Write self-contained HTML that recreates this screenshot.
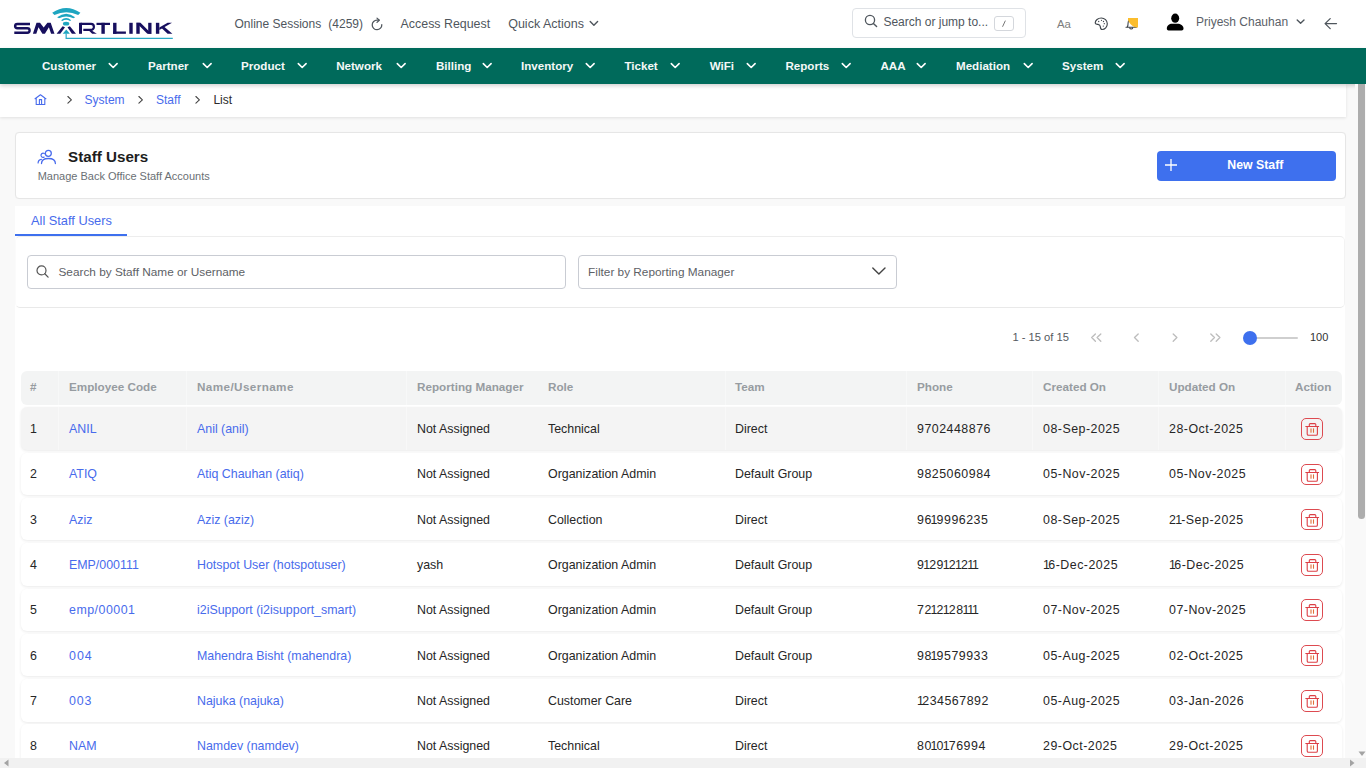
<!DOCTYPE html>
<html><head><meta charset="utf-8"><title>Staff Users</title>
<style>
html,body{margin:0;padding:0;width:1366px;height:768px;overflow:hidden;background:#f9f9f9;font-family:"Liberation Sans", sans-serif;}
.t{position:absolute;white-space:nowrap;}
svg{overflow:visible}
</style></head><body>
<div style="position:absolute;left:0px;top:0px;width:1366px;height:48px;background:#fff"></div>
<svg style="position:absolute;left:0px;top:0px" width="180" height="44" viewBox="0 0 180 44">
<g fill="#1ea5c0">
<path d="M52.2 12.8 Q66.3 3.2 80.4 12.8 L78.2 15 Q66.3 9.4 54.4 15 Z"/>
<path d="M57.1 17.2 Q66.2 10.1 75.2 17.2 L73.4 18.2 Q66.2 14.6 59 18.2 Z"/>
<path d="M61.1 20.3 Q66.2 15.5 71.2 20.3 L70 20.9 Q66.2 18.7 62.3 20.9 Z"/>
<ellipse cx="66.1" cy="23.65" rx="3.2" ry="1.95"/>
<path d="M62.7 33.7 L66.3 29.4 L69.9 33.7 Z"/>
</g>
<path d="M66.15 33.5 V38.3 H172.8" stroke="#2aa9c6" stroke-width="1.2" fill="none"/>
<g fill="#170f5e">
<path d="M32.9 33.8 L36.5 22.8 L40 22.8 L43.7 27.6 L47.4 22.8 L50.7 22.8 L54.5 33.8 L51.1 33.8 L48.9 27.2 L44.9 33.8 L42.4 33.8 L38.5 27.2 L36.3 33.8 Z"/>
<path d="M56.6 33.7 L62.6 26.2 L65 27.3 L60.3 33.7 Z"/>
<path d="M67.5 27.3 L69.9 26.2 L76 33.7 L71.9 33.7 Z"/>
<rect x="79" y="22.8" width="3" height="11"/>
<path d="M88.8 30.5 L91.6 30.5 L96.8 33.8 L92.2 33.8 Z"/>
<rect x="96.5" y="22.8" width="13.5" height="2.2"/>
<rect x="101.4" y="22.8" width="3.4" height="11"/>
<rect x="113.1" y="22.8" width="3.4" height="11"/>
<rect x="113.1" y="31.5" width="12.8" height="2.3"/>
<rect x="129.3" y="22.8" width="3.4" height="11"/>
<rect x="136.3" y="22.8" width="3.4" height="11"/>
<rect x="148.2" y="22.8" width="3.3" height="11"/>
<path d="M136.3 22.8 L140.5 22.8 L151.5 33.8 L147.3 33.8 Z"/>
<rect x="155.9" y="22.8" width="3.4" height="11"/>
<path d="M159.3 27.6 L167.6 22.8 L172 22.8 L159.3 30 Z"/>
<path d="M161 27.4 L163.6 26.3 L172.4 33.8 L167.6 33.8 Z"/>
</g>
<g stroke="#170f5e" fill="none">
<path d="M30 23.95 H17.4 A2.3 2.15 0 0 0 17.4 28.25 H27.3 A2.3 2.25 0 0 1 27.3 32.75 H14.3" stroke-width="2.4"/>
<path d="M80.4 23.95 H91 A2.9 2.95 0 0 1 91 29.85 H83.3" stroke-width="2.2"/>
</g>
</svg>
<div class="t" style="left:234.5px;top:17.74px;font-size:12px;line-height:12px;font-weight:400;color:#4f565d;">Online Sessions</div>
<div class="t" style="left:328.3px;top:17.74px;font-size:12px;line-height:12px;font-weight:400;color:#4f565d;">(4259)</div>
<svg style="position:absolute;left:369.5px;top:17px" width="14" height="14" viewBox="0 0 14 14"><path d="M11.8 7.7 A4.8 4.8 0 1 1 7.1 3.1 H9" stroke="#4f565d" stroke-width="1.25" fill="none" stroke-linecap="round"/><path d="M7 1.1 L9.3 3.2 L7 5.4" stroke="#4f565d" stroke-width="1.25" fill="none" stroke-linecap="round" stroke-linejoin="round"/></svg>
<div class="t" style="left:400.6px;top:18.00px;font-size:12.4px;line-height:12.4px;font-weight:400;color:#4f565d;">Access Request</div>
<div class="t" style="left:508.2px;top:17.92px;font-size:12.5px;line-height:12.5px;font-weight:400;color:#4f565d;">Quick Actions</div>
<svg style="position:absolute;left:589px;top:20px" width="10" height="7" viewBox="0 0 10 7"><path d="M1.2 1.5 L4.9 5.2 L8.6 1.5" stroke="#4f565d" stroke-width="1.4" fill="none" stroke-linecap="round" stroke-linejoin="round"/></svg>
<div style="position:absolute;left:852px;top:8px;width:174px;height:30px;background:#fff;border:1px solid #dfe2e6;border-radius:4px;box-sizing:border-box"></div>
<svg style="position:absolute;left:864px;top:14px" width="14" height="14" viewBox="0 0 14 14"><circle cx="6" cy="6" r="4.6" stroke="#4f565d" stroke-width="1.3" fill="none"/><path d="M9.4 9.4 L12.6 12.6" stroke="#4f565d" stroke-width="1.4" stroke-linecap="round"/></svg>
<div class="t" style="left:883.4px;top:15.84px;font-size:12px;line-height:12px;font-weight:400;color:#4f565d;">Search or jump to...</div>
<div style="position:absolute;left:994px;top:15.5px;width:19.5px;height:15px;border:1px solid #d4d7dc;border-radius:3px;box-sizing:border-box"></div>
<svg style="position:absolute;left:994px;top:15.5px" width="20" height="15" viewBox="0 0 20 15"><path d="M11.2 5 L8.7 10.4" stroke="#666" stroke-width="0.9" stroke-linecap="round"/></svg>
<div class="t" style="left:1057px;top:18.75px;font-size:11.4px;line-height:11.4px;font-weight:400;color:#7d7d7d;">Aa</div>
<svg style="position:absolute;left:1094px;top:17px" width="15" height="14" viewBox="0 0 15 14"><path d="M1.2 6.1 C1.2 3.2 4 1 7.3 1 C10.6 1 13.3 3.6 13.3 6.8 C13.3 10 10.9 12.5 8.1 12.5 C6.6 12.5 6.4 11 6.3 9.6 C6.2 8.4 5.2 7.6 4 7.4 C2.6 7.2 1.2 7.2 1.2 6.1 Z" stroke="#3f454b" stroke-width="1.15" fill="none" stroke-linejoin="round"/><g fill="#3f454b"><circle cx="4.7" cy="4.5" r=".65"/><circle cx="7.5" cy="3.3" r=".65"/><circle cx="9.5" cy="4.5" r=".65"/><circle cx="10.3" cy="6.7" r=".65"/><circle cx="9.3" cy="9.1" r=".65"/></g></svg>
<svg style="position:absolute;left:1124px;top:17px" width="16" height="14" viewBox="0 0 16 14"><path d="M2 10.3 H12.4 M3.2 10.3 C4 9 4.1 7.5 4.1 6 C4.1 3.8 5.4 2.2 7.2 2.2 C9 2.2 10.3 3.8 10.3 6 C10.3 7.5 10.4 9 11.2 10.3 M5.8 11.2 C6.2 12.2 8.2 12.2 8.6 11.2" stroke="#3f454b" stroke-width="1.1" fill="none" stroke-linecap="round"/><path d="M4 1 H14 V10.5 H12.5 C9 10.5 5.5 6.5 4 3 Z" fill="#fbbd2d"/></svg>
<svg style="position:absolute;left:1166px;top:13px" width="18" height="18" viewBox="0 0 18 18"><ellipse cx="9.2" cy="5.2" rx="4" ry="4.6" fill="#000"/><path d="M0.8 15.4 C0.8 12.5 3.4 10.7 6 10.7 H11.6 C14.4 10.7 17.5 12.5 17.5 15.4 C17.5 16.7 16.8 17.4 15.6 17.4 H2.6 C1.5 17.4 0.8 16.7 0.8 15.4 Z" fill="#000"/></svg>
<div class="t" style="left:1196px;top:15.84px;font-size:12px;line-height:12px;font-weight:400;color:#5b6168;">Priyesh Chauhan</div>
<svg style="position:absolute;left:1295px;top:18px" width="11" height="8" viewBox="0 0 11 8"><path d="M2.2 2 L5.6 5.3 L9 2" stroke="#4f565d" stroke-width="1.4" fill="none" stroke-linecap="round" stroke-linejoin="round"/></svg>
<svg style="position:absolute;left:1323px;top:17px" width="15" height="13" viewBox="0 0 15 13"><path d="M13.5 6.6 H2.3 M7.2 1.6 L2.1 6.6 L7.2 11.6" stroke="#4f565d" stroke-width="1.3" fill="none" stroke-linecap="round" stroke-linejoin="round"/></svg>
<div style="position:absolute;left:0px;top:48px;width:1366px;height:36px;background:#006a5b;box-shadow:0 2px 4px rgba(0,0,0,.18);z-index:3"></div>
<div class="t" style="left:42px;top:60.38px;font-size:11.6px;line-height:11.6px;font-weight:700;color:#f4f8f7;z-index:4;width:58px">Customer</div>
<svg style="position:absolute;z-index:4;left:107.9px;top:62px" width="11" height="8" viewBox="0 0 11 8"><path d="M1.3 1.6 L5.2 5.5 L9.1 1.6" stroke="#fff" stroke-width="1.6" fill="none" stroke-linecap="round" stroke-linejoin="round"/></svg>
<div class="t" style="left:148px;top:60.38px;font-size:11.6px;line-height:11.6px;font-weight:700;color:#f4f8f7;z-index:4;width:45px">Partner</div>
<svg style="position:absolute;z-index:4;left:202.0px;top:62px" width="11" height="8" viewBox="0 0 11 8"><path d="M1.3 1.6 L5.2 5.5 L9.1 1.6" stroke="#fff" stroke-width="1.6" fill="none" stroke-linecap="round" stroke-linejoin="round"/></svg>
<div class="t" style="left:241px;top:60.38px;font-size:11.6px;line-height:11.6px;font-weight:700;color:#f4f8f7;z-index:4;width:47px">Product</div>
<svg style="position:absolute;z-index:4;left:296.5px;top:62px" width="11" height="8" viewBox="0 0 11 8"><path d="M1.3 1.6 L5.2 5.5 L9.1 1.6" stroke="#fff" stroke-width="1.6" fill="none" stroke-linecap="round" stroke-linejoin="round"/></svg>
<div class="t" style="left:336.2px;top:60.38px;font-size:11.6px;line-height:11.6px;font-weight:700;color:#f4f8f7;z-index:4;width:51px">Network</div>
<svg style="position:absolute;z-index:4;left:395.5px;top:62px" width="11" height="8" viewBox="0 0 11 8"><path d="M1.3 1.6 L5.2 5.5 L9.1 1.6" stroke="#fff" stroke-width="1.6" fill="none" stroke-linecap="round" stroke-linejoin="round"/></svg>
<div class="t" style="left:436px;top:60.38px;font-size:11.6px;line-height:11.6px;font-weight:700;color:#f4f8f7;z-index:4;width:37px">Billing</div>
<svg style="position:absolute;z-index:4;left:481.5px;top:62px" width="11" height="8" viewBox="0 0 11 8"><path d="M1.3 1.6 L5.2 5.5 L9.1 1.6" stroke="#fff" stroke-width="1.6" fill="none" stroke-linecap="round" stroke-linejoin="round"/></svg>
<div class="t" style="left:521px;top:60.38px;font-size:11.6px;line-height:11.6px;font-weight:700;color:#f4f8f7;z-index:4;width:55.7px">Inventory</div>
<svg style="position:absolute;z-index:4;left:584.5px;top:62px" width="11" height="8" viewBox="0 0 11 8"><path d="M1.3 1.6 L5.2 5.5 L9.1 1.6" stroke="#fff" stroke-width="1.6" fill="none" stroke-linecap="round" stroke-linejoin="round"/></svg>
<div class="t" style="left:624.4px;top:60.38px;font-size:11.6px;line-height:11.6px;font-weight:700;color:#f4f8f7;z-index:4;width:37.2px">Ticket</div>
<svg style="position:absolute;z-index:4;left:670.0px;top:62px" width="11" height="8" viewBox="0 0 11 8"><path d="M1.3 1.6 L5.2 5.5 L9.1 1.6" stroke="#fff" stroke-width="1.6" fill="none" stroke-linecap="round" stroke-linejoin="round"/></svg>
<div class="t" style="left:709.7px;top:60.38px;font-size:11.6px;line-height:11.6px;font-weight:700;color:#f4f8f7;z-index:4;width:27.5px">WiFi</div>
<svg style="position:absolute;z-index:4;left:745.5px;top:62px" width="11" height="8" viewBox="0 0 11 8"><path d="M1.3 1.6 L5.2 5.5 L9.1 1.6" stroke="#fff" stroke-width="1.6" fill="none" stroke-linecap="round" stroke-linejoin="round"/></svg>
<div class="t" style="left:785.4px;top:60.38px;font-size:11.6px;line-height:11.6px;font-weight:700;color:#f4f8f7;z-index:4;width:47px">Reports</div>
<svg style="position:absolute;z-index:4;left:840.5px;top:62px" width="11" height="8" viewBox="0 0 11 8"><path d="M1.3 1.6 L5.2 5.5 L9.1 1.6" stroke="#fff" stroke-width="1.6" fill="none" stroke-linecap="round" stroke-linejoin="round"/></svg>
<div class="t" style="left:880.4px;top:60.38px;font-size:11.6px;line-height:11.6px;font-weight:700;color:#f4f8f7;z-index:4;width:28px">AAA</div>
<svg style="position:absolute;z-index:4;left:916.3px;top:62px" width="11" height="8" viewBox="0 0 11 8"><path d="M1.3 1.6 L5.2 5.5 L9.1 1.6" stroke="#fff" stroke-width="1.6" fill="none" stroke-linecap="round" stroke-linejoin="round"/></svg>
<div class="t" style="left:956px;top:60.38px;font-size:11.6px;line-height:11.6px;font-weight:700;color:#f4f8f7;z-index:4;width:58.5px">Mediation</div>
<svg style="position:absolute;z-index:4;left:1022.9px;top:62px" width="11" height="8" viewBox="0 0 11 8"><path d="M1.3 1.6 L5.2 5.5 L9.1 1.6" stroke="#fff" stroke-width="1.6" fill="none" stroke-linecap="round" stroke-linejoin="round"/></svg>
<div class="t" style="left:1062px;top:60.38px;font-size:11.6px;line-height:11.6px;font-weight:700;color:#f4f8f7;z-index:4;width:45.2px">System</div>
<svg style="position:absolute;z-index:4;left:1115.1px;top:62px" width="11" height="8" viewBox="0 0 11 8"><path d="M1.3 1.6 L5.2 5.5 L9.1 1.6" stroke="#fff" stroke-width="1.6" fill="none" stroke-linecap="round" stroke-linejoin="round"/></svg>
<div style="position:absolute;left:0px;top:84px;width:1346px;height:33px;background:#fff;box-shadow:0 1px 3px rgba(0,0,0,.10);z-index:2"></div>
<svg style="position:absolute;z-index:3;left:34px;top:93px" width="13" height="13" viewBox="0 0 13 13"><path d="M1.05 5.75 L6.44 1.7 L11.9 5.75 M2.2 4.9 V11.5 H10.8 V4.9 M5.4 11.5 V6.6 H7.6 V11.5" stroke="#486bec" stroke-width="1.1" fill="none" stroke-linejoin="round" stroke-linecap="round"/></svg>
<svg style="position:absolute;z-index:3;left:66.5px;top:95px" width="7" height="10" viewBox="0 0 7 10"><path d="M0.9 1.5 L4.4 4.8 L0.9 8.1" stroke="#444" stroke-width="1.1" fill="none" stroke-linecap="round" stroke-linejoin="round"/></svg>
<svg style="position:absolute;z-index:3;left:137.7px;top:95px" width="7" height="10" viewBox="0 0 7 10"><path d="M0.9 1.5 L4.4 4.8 L0.9 8.1" stroke="#444" stroke-width="1.1" fill="none" stroke-linecap="round" stroke-linejoin="round"/></svg>
<svg style="position:absolute;z-index:3;left:195.2px;top:95px" width="7" height="10" viewBox="0 0 7 10"><path d="M0.9 1.5 L4.4 4.8 L0.9 8.1" stroke="#444" stroke-width="1.1" fill="none" stroke-linecap="round" stroke-linejoin="round"/></svg>
<div class="t" style="left:84.6px;top:93.54px;font-size:12px;line-height:12px;font-weight:400;color:#486bec;z-index:3">System</div>
<div class="t" style="left:156px;top:93.54px;font-size:12px;line-height:12px;font-weight:400;color:#486bec;z-index:3">Staff</div>
<div class="t" style="left:213.4px;top:93.54px;font-size:12px;line-height:12px;font-weight:400;color:#2b2b2b;z-index:3">List</div>
<div style="position:absolute;left:15px;top:132px;width:1331px;height:67px;background:#fff;border:1px solid #e6e6e6;border-radius:4px;box-sizing:border-box;box-shadow:0 0 1px rgba(0,0,0,.04)"></div>
<svg style="position:absolute;left:37px;top:149px" width="20" height="16" viewBox="0 0 20 16"><circle cx="11.3" cy="4.3" r="3" stroke="#486bec" stroke-width="1.3" fill="none"/><path d="M4.5 14.6 C4.5 11.3 7.3 9.5 11.4 9.5 C15.5 9.5 18.4 11.3 18.4 14.6" stroke="#486bec" stroke-width="1.3" fill="none" stroke-linecap="round"/><path d="M7.4 4.6 A2.1 2.1 0 1 0 7.1 8.1 M1.1 14 C1.1 11.9 2.4 10.6 4.4 10.3" stroke="#486bec" stroke-width="1.2" fill="none" stroke-linecap="round"/></svg>
<div class="t" style="left:68px;top:149.13px;font-size:15.2px;line-height:15.2px;font-weight:700;color:#1d1d1d;">Staff Users</div>
<div class="t" style="left:37.7px;top:170.69px;font-size:11px;line-height:11px;font-weight:400;color:#6a6f74;">Manage Back Office Staff Accounts</div>
<div style="position:absolute;left:1157px;top:151px;width:179px;height:30px;background:#3e70ee;border-radius:4px"></div>
<svg style="position:absolute;left:1164px;top:158px" width="14" height="14" viewBox="0 0 14 14"><path d="M7 1 V13 M1 7 H13" stroke="#fff" stroke-width="1.3"/></svg>
<div class="t" style="left:1227.3px;top:158.89px;font-size:12.3px;line-height:12.3px;font-weight:700;color:#fff;">New Staff</div>
<div style="position:absolute;left:15px;top:206px;width:1330px;height:552px;background:#fff"></div>
<div class="t" style="left:31px;top:215.06px;font-size:12.8px;line-height:12.8px;font-weight:400;color:#486bec;">All Staff Users</div>
<div style="position:absolute;left:15px;top:234px;width:112.4px;height:2.2px;background:#3e70ee"></div>
<div style="position:absolute;left:27px;top:254.5px;width:539px;height:34px;border:1px solid #c9ccd3;border-radius:4px;box-sizing:border-box;background:#fff"></div>
<svg style="position:absolute;left:36px;top:265px" width="14" height="14" viewBox="0 0 14 14"><circle cx="5.5" cy="5.4" r="4.5" stroke="#555" stroke-width="1.2" fill="none"/><path d="M8.8 8.8 L12.1 12.1" stroke="#555" stroke-width="1.3" stroke-linecap="round"/></svg>
<div class="t" style="left:58.5px;top:266.91px;font-size:11.8px;line-height:11.8px;font-weight:400;color:#5d6166;">Search by Staff Name or Username</div>
<div style="position:absolute;left:578px;top:254.5px;width:319px;height:34px;border:1px solid #c9ccd3;border-radius:4px;box-sizing:border-box;background:#fff"></div>
<div class="t" style="left:588.1px;top:266.91px;font-size:11.8px;line-height:11.8px;font-weight:400;color:#5d6166;">Filter by Reporting Manager</div>
<svg style="position:absolute;left:871px;top:266px" width="16" height="11" viewBox="0 0 16 11"><path d="M1.8 2 L7.9 8.1 L14 2" stroke="#444" stroke-width="1.4" fill="none" stroke-linecap="round" stroke-linejoin="round"/></svg>
<div style="position:absolute;left:15px;top:236px;width:1330px;height:72px;border:1px solid #f3f3f3;border-left-color:#fbfbfb;border-bottom-color:#e9e9e9;border-top-color:#ededed;border-radius:5px;box-sizing:border-box"></div>
<div class="t" style="left:1012.4px;top:331.72px;font-size:11.2px;line-height:11.2px;font-weight:400;color:#555a60;">1 - 15 of 15</div>
<svg style="position:absolute;left:1089px;top:331px" width="15" height="13" viewBox="0 0 15 13"><path d="M6.4 3 L2.7 6.6 L6.4 10.2 M11.8 3 L8.1 6.6 L11.8 10.2" stroke="#bdbdbd" stroke-width="1.35" fill="none" stroke-linecap="round" stroke-linejoin="round"/></svg>
<svg style="position:absolute;left:1132px;top:331px" width="9" height="13" viewBox="0 0 9 13"><path d="M6.2 3 L2.5 6.6 L6.2 10.2" stroke="#bdbdbd" stroke-width="1.35" fill="none" stroke-linecap="round" stroke-linejoin="round"/></svg>
<svg style="position:absolute;left:1170px;top:331px" width="9" height="13" viewBox="0 0 9 13"><path d="M3.2 3 L6.9 6.6 L3.2 10.2" stroke="#bdbdbd" stroke-width="1.35" fill="none" stroke-linecap="round" stroke-linejoin="round"/></svg>
<svg style="position:absolute;left:1208px;top:331px" width="15" height="13" viewBox="0 0 15 13"><path d="M2.8 3 L6.5 6.6 L2.8 10.2 M8.2 3 L11.9 6.6 L8.2 10.2" stroke="#bdbdbd" stroke-width="1.35" fill="none" stroke-linecap="round" stroke-linejoin="round"/></svg>
<div style="position:absolute;left:1256px;top:336.5px;width:42px;height:2px;background:#cfcfcf;border-radius:1px"></div>
<div style="position:absolute;left:1242.7px;top:330.6px;width:14.2px;height:14.2px;background:#3e70ee;border-radius:50%"></div>
<div class="t" style="left:1309.9px;top:331.89px;font-size:11px;line-height:11px;font-weight:400;color:#333;">100</div>
<div style="position:absolute;left:21px;top:370.5px;width:1320.5px;height:34.3px;background:#f3f4f4;border-radius:6px"></div>
<div style="position:absolute;left:58px;top:370.5px;width:1px;height:34.3px;background:#f7f8f8"></div>
<div style="position:absolute;left:186.3px;top:370.5px;width:1px;height:34.3px;background:#f7f8f8"></div>
<div style="position:absolute;left:406.2px;top:370.5px;width:1px;height:34.3px;background:#f7f8f8"></div>
<div style="position:absolute;left:724.6px;top:370.5px;width:1px;height:34.3px;background:#f7f8f8"></div>
<div style="position:absolute;left:906.2px;top:370.5px;width:1px;height:34.3px;background:#f7f8f8"></div>
<div style="position:absolute;left:1032.4px;top:370.5px;width:1px;height:34.3px;background:#f7f8f8"></div>
<div style="position:absolute;left:1158px;top:370.5px;width:1px;height:34.3px;background:#f7f8f8"></div>
<div style="position:absolute;left:1284.6px;top:370.5px;width:1px;height:34.3px;background:#f7f8f8"></div>
<div class="t" style="left:30px;top:380.50px;font-size:11.7px;line-height:11.7px;font-weight:700;color:#979ca1;">#</div>
<div class="t" style="left:69px;top:380.50px;font-size:11.7px;line-height:11.7px;font-weight:700;color:#979ca1;">Employee Code</div>
<div class="t" style="left:197px;top:380.50px;font-size:11.7px;line-height:11.7px;font-weight:700;color:#979ca1;letter-spacing:0.4px">Name/Username</div>
<div class="t" style="left:417px;top:380.50px;font-size:11.7px;line-height:11.7px;font-weight:700;color:#979ca1;">Reporting Manager</div>
<div class="t" style="left:548px;top:380.50px;font-size:11.7px;line-height:11.7px;font-weight:700;color:#979ca1;">Role</div>
<div class="t" style="left:735px;top:380.50px;font-size:11.7px;line-height:11.7px;font-weight:700;color:#979ca1;">Team</div>
<div class="t" style="left:917px;top:380.50px;font-size:11.7px;line-height:11.7px;font-weight:700;color:#979ca1;">Phone</div>
<div class="t" style="left:1043px;top:380.50px;font-size:11.7px;line-height:11.7px;font-weight:700;color:#979ca1;">Created On</div>
<div class="t" style="left:1169px;top:380.50px;font-size:11.7px;line-height:11.7px;font-weight:700;color:#979ca1;">Updated On</div>
<div class="t" style="left:1295px;top:380.50px;font-size:11.7px;line-height:11.7px;font-weight:700;color:#979ca1;">Action</div>
<div style="position:absolute;left:21px;top:407.3px;width:1320.5px;height:42.6px;background:#f4f4f4;border-radius:6px;box-shadow:0 1px 3px rgba(0,0,0,.085)"></div>
<div style="position:absolute;left:58px;top:407.3px;width:1px;height:42.6px;background:#f8f8f8"></div>
<div style="position:absolute;left:186.3px;top:407.3px;width:1px;height:42.6px;background:#f8f8f8"></div>
<div style="position:absolute;left:406.2px;top:407.3px;width:1px;height:42.6px;background:#f8f8f8"></div>
<div style="position:absolute;left:724.6px;top:407.3px;width:1px;height:42.6px;background:#f8f8f8"></div>
<div style="position:absolute;left:906.2px;top:407.3px;width:1px;height:42.6px;background:#f8f8f8"></div>
<div style="position:absolute;left:1032.4px;top:407.3px;width:1px;height:42.6px;background:#f8f8f8"></div>
<div style="position:absolute;left:1158px;top:407.3px;width:1px;height:42.6px;background:#f8f8f8"></div>
<div style="position:absolute;left:1284.6px;top:407.3px;width:1px;height:42.6px;background:#f8f8f8"></div>
<div class="t" style="left:30px;top:423.10px;font-size:12.4px;line-height:12.4px;font-weight:400;color:#262626;">1</div>
<div class="t" style="left:69px;top:423.10px;font-size:12.4px;line-height:12.4px;font-weight:400;color:#486bec;">ANIL</div>
<div class="t" style="left:197px;top:423.10px;font-size:12.4px;line-height:12.4px;font-weight:400;color:#486bec;">Anil (anil)</div>
<div class="t" style="left:417px;top:423.10px;font-size:12.4px;line-height:12.4px;font-weight:400;color:#262626;">Not Assigned</div>
<div class="t" style="left:548px;top:423.10px;font-size:12.4px;line-height:12.4px;font-weight:400;color:#262626;">Technical</div>
<div class="t" style="left:735px;top:423.10px;font-size:12.4px;line-height:12.4px;font-weight:400;color:#262626;">Direct</div>
<div class="t" style="left:917px;top:423.10px;font-size:12.4px;line-height:12.4px;font-weight:400;color:#262626;letter-spacing:0.5px">9702448876</div>
<div class="t" style="left:1043px;top:423.10px;font-size:12.4px;line-height:12.4px;font-weight:400;color:#262626;letter-spacing:0.5px">08-Sep-2025</div>
<div class="t" style="left:1169px;top:423.10px;font-size:12.4px;line-height:12.4px;font-weight:400;color:#262626;letter-spacing:0.5px">28-Oct-2025</div>
<div style="position:absolute;left:1301.2px;top:418.2px;width:21.8px;height:21.6px;border:1.3px solid #dd4a50;border-radius:5px;box-sizing:border-box"></div>
<svg style="position:absolute;left:1301.2px;top:418.2px" width="22" height="22" viewBox="0 0 22 22"><path d="M8.3 8.4 V6.6 Q8.3 5.6 9.3 5.6 H13.8 Q14.8 5.6 14.8 6.6 V8.4 M4.8 8.5 H17.6 M6.2 8.5 V15.9 Q6.2 17.2 7.5 17.2 H15.1 Q16.4 17.2 16.4 15.9 V8.5" stroke="#dc3f45" stroke-width="1.1" fill="none" stroke-linecap="round" stroke-linejoin="round"/><path d="M10 10.8 V14.3 M12.5 10.8 V14.3" stroke="#e0703a" stroke-width="1.1" stroke-linecap="round"/></svg>
<div style="position:absolute;left:21px;top:452.6px;width:1320.5px;height:42.6px;background:#fff;border-radius:6px;box-shadow:0 1px 3px rgba(0,0,0,.085)"></div>
<div class="t" style="left:30px;top:468.40px;font-size:12.4px;line-height:12.4px;font-weight:400;color:#262626;">2</div>
<div class="t" style="left:69px;top:468.40px;font-size:12.4px;line-height:12.4px;font-weight:400;color:#486bec;">ATIQ</div>
<div class="t" style="left:197px;top:468.40px;font-size:12.4px;line-height:12.4px;font-weight:400;color:#486bec;">Atiq Chauhan (atiq)</div>
<div class="t" style="left:417px;top:468.40px;font-size:12.4px;line-height:12.4px;font-weight:400;color:#262626;">Not Assigned</div>
<div class="t" style="left:548px;top:468.40px;font-size:12.4px;line-height:12.4px;font-weight:400;color:#262626;">Organization Admin</div>
<div class="t" style="left:735px;top:468.40px;font-size:12.4px;line-height:12.4px;font-weight:400;color:#262626;">Default Group</div>
<div class="t" style="left:917px;top:468.40px;font-size:12.4px;line-height:12.4px;font-weight:400;color:#262626;letter-spacing:0.5px">9825060984</div>
<div class="t" style="left:1043px;top:468.40px;font-size:12.4px;line-height:12.4px;font-weight:400;color:#262626;letter-spacing:0.5px">05-Nov-2025</div>
<div class="t" style="left:1169px;top:468.40px;font-size:12.4px;line-height:12.4px;font-weight:400;color:#262626;letter-spacing:0.5px">05-Nov-2025</div>
<div style="position:absolute;left:1301.2px;top:463.5px;width:21.8px;height:21.6px;border:1.3px solid #dd4a50;border-radius:5px;box-sizing:border-box"></div>
<svg style="position:absolute;left:1301.2px;top:463.5px" width="22" height="22" viewBox="0 0 22 22"><path d="M8.3 8.4 V6.6 Q8.3 5.6 9.3 5.6 H13.8 Q14.8 5.6 14.8 6.6 V8.4 M4.8 8.5 H17.6 M6.2 8.5 V15.9 Q6.2 17.2 7.5 17.2 H15.1 Q16.4 17.2 16.4 15.9 V8.5" stroke="#dc3f45" stroke-width="1.1" fill="none" stroke-linecap="round" stroke-linejoin="round"/><path d="M10 10.8 V14.3 M12.5 10.8 V14.3" stroke="#e0703a" stroke-width="1.1" stroke-linecap="round"/></svg>
<div style="position:absolute;left:21px;top:497.9px;width:1320.5px;height:42.6px;background:#fff;border-radius:6px;box-shadow:0 1px 3px rgba(0,0,0,.085)"></div>
<div class="t" style="left:30px;top:513.70px;font-size:12.4px;line-height:12.4px;font-weight:400;color:#262626;">3</div>
<div class="t" style="left:69px;top:513.70px;font-size:12.4px;line-height:12.4px;font-weight:400;color:#486bec;">Aziz</div>
<div class="t" style="left:197px;top:513.70px;font-size:12.4px;line-height:12.4px;font-weight:400;color:#486bec;">Aziz (aziz)</div>
<div class="t" style="left:417px;top:513.70px;font-size:12.4px;line-height:12.4px;font-weight:400;color:#262626;">Not Assigned</div>
<div class="t" style="left:548px;top:513.70px;font-size:12.4px;line-height:12.4px;font-weight:400;color:#262626;">Collection</div>
<div class="t" style="left:735px;top:513.70px;font-size:12.4px;line-height:12.4px;font-weight:400;color:#262626;">Direct</div>
<div class="t" style="left:917px;top:513.70px;font-size:12.4px;line-height:12.4px;font-weight:400;color:#262626;letter-spacing:0.5px">96<span style="margin-left:-1.2px;letter-spacing:-0.9px">1</span>9996235</div>
<div class="t" style="left:1043px;top:513.70px;font-size:12.4px;line-height:12.4px;font-weight:400;color:#262626;letter-spacing:0.5px">08-Sep-2025</div>
<div class="t" style="left:1169px;top:513.70px;font-size:12.4px;line-height:12.4px;font-weight:400;color:#262626;letter-spacing:0.5px">2<span style="margin-left:-1.2px;letter-spacing:-0.9px">1</span>-Sep-2025</div>
<div style="position:absolute;left:1301.2px;top:508.8px;width:21.8px;height:21.6px;border:1.3px solid #dd4a50;border-radius:5px;box-sizing:border-box"></div>
<svg style="position:absolute;left:1301.2px;top:508.8px" width="22" height="22" viewBox="0 0 22 22"><path d="M8.3 8.4 V6.6 Q8.3 5.6 9.3 5.6 H13.8 Q14.8 5.6 14.8 6.6 V8.4 M4.8 8.5 H17.6 M6.2 8.5 V15.9 Q6.2 17.2 7.5 17.2 H15.1 Q16.4 17.2 16.4 15.9 V8.5" stroke="#dc3f45" stroke-width="1.1" fill="none" stroke-linecap="round" stroke-linejoin="round"/><path d="M10 10.8 V14.3 M12.5 10.8 V14.3" stroke="#e0703a" stroke-width="1.1" stroke-linecap="round"/></svg>
<div style="position:absolute;left:21px;top:543.2px;width:1320.5px;height:42.6px;background:#fff;border-radius:6px;box-shadow:0 1px 3px rgba(0,0,0,.085)"></div>
<div class="t" style="left:30px;top:559.00px;font-size:12.4px;line-height:12.4px;font-weight:400;color:#262626;">4</div>
<div class="t" style="left:69px;top:559.00px;font-size:12.4px;line-height:12.4px;font-weight:400;color:#486bec;">EMP/000111</div>
<div class="t" style="left:197px;top:559.00px;font-size:12.4px;line-height:12.4px;font-weight:400;color:#486bec;">Hotspot User (hotspotuser)</div>
<div class="t" style="left:417px;top:559.00px;font-size:12.4px;line-height:12.4px;font-weight:400;color:#262626;">yash</div>
<div class="t" style="left:548px;top:559.00px;font-size:12.4px;line-height:12.4px;font-weight:400;color:#262626;">Organization Admin</div>
<div class="t" style="left:735px;top:559.00px;font-size:12.4px;line-height:12.4px;font-weight:400;color:#262626;">Default Group</div>
<div class="t" style="left:917px;top:559.00px;font-size:12.4px;line-height:12.4px;font-weight:400;color:#262626;letter-spacing:0.5px">9<span style="margin-left:-1.2px;letter-spacing:-0.9px">1</span>29<span style="margin-left:-1.2px;letter-spacing:-0.9px">1</span>2<span style="margin-left:-1.2px;letter-spacing:-0.9px">1</span>2<span style="margin-left:-1.2px;letter-spacing:-0.9px">1</span><span style="margin-left:-1.2px;letter-spacing:-0.9px">1</span></div>
<div class="t" style="left:1043px;top:559.00px;font-size:12.4px;line-height:12.4px;font-weight:400;color:#262626;letter-spacing:0.5px"><span style="letter-spacing:-1.6px">1</span>6-Dec-2025</div>
<div class="t" style="left:1169px;top:559.00px;font-size:12.4px;line-height:12.4px;font-weight:400;color:#262626;letter-spacing:0.5px"><span style="letter-spacing:-1.6px">1</span>6-Dec-2025</div>
<div style="position:absolute;left:1301.2px;top:554.1px;width:21.8px;height:21.6px;border:1.3px solid #dd4a50;border-radius:5px;box-sizing:border-box"></div>
<svg style="position:absolute;left:1301.2px;top:554.1px" width="22" height="22" viewBox="0 0 22 22"><path d="M8.3 8.4 V6.6 Q8.3 5.6 9.3 5.6 H13.8 Q14.8 5.6 14.8 6.6 V8.4 M4.8 8.5 H17.6 M6.2 8.5 V15.9 Q6.2 17.2 7.5 17.2 H15.1 Q16.4 17.2 16.4 15.9 V8.5" stroke="#dc3f45" stroke-width="1.1" fill="none" stroke-linecap="round" stroke-linejoin="round"/><path d="M10 10.8 V14.3 M12.5 10.8 V14.3" stroke="#e0703a" stroke-width="1.1" stroke-linecap="round"/></svg>
<div style="position:absolute;left:21px;top:588.5px;width:1320.5px;height:42.6px;background:#fff;border-radius:6px;box-shadow:0 1px 3px rgba(0,0,0,.085)"></div>
<div class="t" style="left:30px;top:604.30px;font-size:12.4px;line-height:12.4px;font-weight:400;color:#262626;">5</div>
<div class="t" style="left:69px;top:604.30px;font-size:12.4px;line-height:12.4px;font-weight:400;color:#486bec;letter-spacing:0.49px">emp/00001</div>
<div class="t" style="left:197px;top:604.30px;font-size:12.4px;line-height:12.4px;font-weight:400;color:#486bec;">i2iSupport (i2isupport_smart)</div>
<div class="t" style="left:417px;top:604.30px;font-size:12.4px;line-height:12.4px;font-weight:400;color:#262626;">Not Assigned</div>
<div class="t" style="left:548px;top:604.30px;font-size:12.4px;line-height:12.4px;font-weight:400;color:#262626;">Organization Admin</div>
<div class="t" style="left:735px;top:604.30px;font-size:12.4px;line-height:12.4px;font-weight:400;color:#262626;">Default Group</div>
<div class="t" style="left:917px;top:604.30px;font-size:12.4px;line-height:12.4px;font-weight:400;color:#262626;letter-spacing:0.5px">72<span style="margin-left:-1.2px;letter-spacing:-0.9px">1</span>2<span style="margin-left:-1.2px;letter-spacing:-0.9px">1</span>28<span style="margin-left:-1.2px;letter-spacing:-0.9px">1</span><span style="margin-left:-1.2px;letter-spacing:-0.9px">1</span><span style="margin-left:-1.2px;letter-spacing:-0.9px">1</span></div>
<div class="t" style="left:1043px;top:604.30px;font-size:12.4px;line-height:12.4px;font-weight:400;color:#262626;letter-spacing:0.5px">07-Nov-2025</div>
<div class="t" style="left:1169px;top:604.30px;font-size:12.4px;line-height:12.4px;font-weight:400;color:#262626;letter-spacing:0.5px">07-Nov-2025</div>
<div style="position:absolute;left:1301.2px;top:599.4px;width:21.8px;height:21.6px;border:1.3px solid #dd4a50;border-radius:5px;box-sizing:border-box"></div>
<svg style="position:absolute;left:1301.2px;top:599.4px" width="22" height="22" viewBox="0 0 22 22"><path d="M8.3 8.4 V6.6 Q8.3 5.6 9.3 5.6 H13.8 Q14.8 5.6 14.8 6.6 V8.4 M4.8 8.5 H17.6 M6.2 8.5 V15.9 Q6.2 17.2 7.5 17.2 H15.1 Q16.4 17.2 16.4 15.9 V8.5" stroke="#dc3f45" stroke-width="1.1" fill="none" stroke-linecap="round" stroke-linejoin="round"/><path d="M10 10.8 V14.3 M12.5 10.8 V14.3" stroke="#e0703a" stroke-width="1.1" stroke-linecap="round"/></svg>
<div style="position:absolute;left:21px;top:633.8px;width:1320.5px;height:42.6px;background:#fff;border-radius:6px;box-shadow:0 1px 3px rgba(0,0,0,.085)"></div>
<div class="t" style="left:30px;top:649.60px;font-size:12.4px;line-height:12.4px;font-weight:400;color:#262626;">6</div>
<div class="t" style="left:69px;top:649.60px;font-size:12.4px;line-height:12.4px;font-weight:400;color:#486bec;letter-spacing:1px">004</div>
<div class="t" style="left:197px;top:649.60px;font-size:12.4px;line-height:12.4px;font-weight:400;color:#486bec;">Mahendra Bisht (mahendra)</div>
<div class="t" style="left:417px;top:649.60px;font-size:12.4px;line-height:12.4px;font-weight:400;color:#262626;">Not Assigned</div>
<div class="t" style="left:548px;top:649.60px;font-size:12.4px;line-height:12.4px;font-weight:400;color:#262626;">Organization Admin</div>
<div class="t" style="left:735px;top:649.60px;font-size:12.4px;line-height:12.4px;font-weight:400;color:#262626;">Default Group</div>
<div class="t" style="left:917px;top:649.60px;font-size:12.4px;line-height:12.4px;font-weight:400;color:#262626;letter-spacing:0.5px">98<span style="margin-left:-1.2px;letter-spacing:-0.9px">1</span>9579933</div>
<div class="t" style="left:1043px;top:649.60px;font-size:12.4px;line-height:12.4px;font-weight:400;color:#262626;letter-spacing:0.5px">05-Aug-2025</div>
<div class="t" style="left:1169px;top:649.60px;font-size:12.4px;line-height:12.4px;font-weight:400;color:#262626;letter-spacing:0.5px">02-Oct-2025</div>
<div style="position:absolute;left:1301.2px;top:644.7px;width:21.8px;height:21.6px;border:1.3px solid #dd4a50;border-radius:5px;box-sizing:border-box"></div>
<svg style="position:absolute;left:1301.2px;top:644.7px" width="22" height="22" viewBox="0 0 22 22"><path d="M8.3 8.4 V6.6 Q8.3 5.6 9.3 5.6 H13.8 Q14.8 5.6 14.8 6.6 V8.4 M4.8 8.5 H17.6 M6.2 8.5 V15.9 Q6.2 17.2 7.5 17.2 H15.1 Q16.4 17.2 16.4 15.9 V8.5" stroke="#dc3f45" stroke-width="1.1" fill="none" stroke-linecap="round" stroke-linejoin="round"/><path d="M10 10.8 V14.3 M12.5 10.8 V14.3" stroke="#e0703a" stroke-width="1.1" stroke-linecap="round"/></svg>
<div style="position:absolute;left:21px;top:679.1px;width:1320.5px;height:42.6px;background:#fff;border-radius:6px;box-shadow:0 1px 3px rgba(0,0,0,.085)"></div>
<div class="t" style="left:30px;top:694.90px;font-size:12.4px;line-height:12.4px;font-weight:400;color:#262626;">7</div>
<div class="t" style="left:69px;top:694.90px;font-size:12.4px;line-height:12.4px;font-weight:400;color:#486bec;letter-spacing:0.85px">003</div>
<div class="t" style="left:197px;top:694.90px;font-size:12.4px;line-height:12.4px;font-weight:400;color:#486bec;">Najuka (najuka)</div>
<div class="t" style="left:417px;top:694.90px;font-size:12.4px;line-height:12.4px;font-weight:400;color:#262626;">Not Assigned</div>
<div class="t" style="left:548px;top:694.90px;font-size:12.4px;line-height:12.4px;font-weight:400;color:#262626;">Customer Care</div>
<div class="t" style="left:735px;top:694.90px;font-size:12.4px;line-height:12.4px;font-weight:400;color:#262626;">Direct</div>
<div class="t" style="left:917px;top:694.90px;font-size:12.4px;line-height:12.4px;font-weight:400;color:#262626;letter-spacing:0.5px"><span style="letter-spacing:-1.6px">1</span>234567892</div>
<div class="t" style="left:1043px;top:694.90px;font-size:12.4px;line-height:12.4px;font-weight:400;color:#262626;letter-spacing:0.5px">05-Aug-2025</div>
<div class="t" style="left:1169px;top:694.90px;font-size:12.4px;line-height:12.4px;font-weight:400;color:#262626;letter-spacing:0.5px">03-Jan-2026</div>
<div style="position:absolute;left:1301.2px;top:690.0px;width:21.8px;height:21.6px;border:1.3px solid #dd4a50;border-radius:5px;box-sizing:border-box"></div>
<svg style="position:absolute;left:1301.2px;top:690.0px" width="22" height="22" viewBox="0 0 22 22"><path d="M8.3 8.4 V6.6 Q8.3 5.6 9.3 5.6 H13.8 Q14.8 5.6 14.8 6.6 V8.4 M4.8 8.5 H17.6 M6.2 8.5 V15.9 Q6.2 17.2 7.5 17.2 H15.1 Q16.4 17.2 16.4 15.9 V8.5" stroke="#dc3f45" stroke-width="1.1" fill="none" stroke-linecap="round" stroke-linejoin="round"/><path d="M10 10.8 V14.3 M12.5 10.8 V14.3" stroke="#e0703a" stroke-width="1.1" stroke-linecap="round"/></svg>
<div style="position:absolute;left:21px;top:724.4px;width:1320.5px;height:42.6px;background:#fff;border-radius:6px;box-shadow:0 1px 3px rgba(0,0,0,.085)"></div>
<div class="t" style="left:30px;top:740.20px;font-size:12.4px;line-height:12.4px;font-weight:400;color:#262626;">8</div>
<div class="t" style="left:69px;top:740.20px;font-size:12.4px;line-height:12.4px;font-weight:400;color:#486bec;">NAM</div>
<div class="t" style="left:197px;top:740.20px;font-size:12.4px;line-height:12.4px;font-weight:400;color:#486bec;">Namdev (namdev)</div>
<div class="t" style="left:417px;top:740.20px;font-size:12.4px;line-height:12.4px;font-weight:400;color:#262626;">Not Assigned</div>
<div class="t" style="left:548px;top:740.20px;font-size:12.4px;line-height:12.4px;font-weight:400;color:#262626;">Technical</div>
<div class="t" style="left:735px;top:740.20px;font-size:12.4px;line-height:12.4px;font-weight:400;color:#262626;">Direct</div>
<div class="t" style="left:917px;top:740.20px;font-size:12.4px;line-height:12.4px;font-weight:400;color:#262626;letter-spacing:0.5px">80<span style="margin-left:-1.2px;letter-spacing:-0.9px">1</span>0<span style="margin-left:-1.2px;letter-spacing:-0.9px">1</span>76994</div>
<div class="t" style="left:1043px;top:740.20px;font-size:12.4px;line-height:12.4px;font-weight:400;color:#262626;letter-spacing:0.5px">29-Oct-2025</div>
<div class="t" style="left:1169px;top:740.20px;font-size:12.4px;line-height:12.4px;font-weight:400;color:#262626;letter-spacing:0.5px">29-Oct-2025</div>
<div style="position:absolute;left:1301.2px;top:735.3px;width:21.8px;height:21.6px;border:1.3px solid #dd4a50;border-radius:5px;box-sizing:border-box"></div>
<svg style="position:absolute;left:1301.2px;top:735.3px" width="22" height="22" viewBox="0 0 22 22"><path d="M8.3 8.4 V6.6 Q8.3 5.6 9.3 5.6 H13.8 Q14.8 5.6 14.8 6.6 V8.4 M4.8 8.5 H17.6 M6.2 8.5 V15.9 Q6.2 17.2 7.5 17.2 H15.1 Q16.4 17.2 16.4 15.9 V8.5" stroke="#dc3f45" stroke-width="1.1" fill="none" stroke-linecap="round" stroke-linejoin="round"/><path d="M10 10.8 V14.3 M12.5 10.8 V14.3" stroke="#e0703a" stroke-width="1.1" stroke-linecap="round"/></svg>
<div style="position:absolute;left:1355px;top:84px;width:11px;height:674px;background:#f9f9f9;z-index:5"></div>
<div style="position:absolute;left:1358.4px;top:84px;width:6.6px;height:434.5px;background:#adadad;border-radius:0 0 4px 4px;z-index:6"></div>
<svg style="position:absolute;z-index:6;left:1356.6px;top:749.5px" width="10" height="8" viewBox="0 0 10 8"><path d="M1.5 1.5 H8.5 L5 6 Z" fill="#a3a3a3"/></svg>
<div style="position:absolute;left:0px;top:758px;width:1366px;height:10px;background:#f1f1f1;z-index:5"></div>
<svg style="position:absolute;z-index:6;left:1px;top:758px" width="10" height="10" viewBox="0 0 10 10"><path d="M7.5 1.5 V8.5 L3 5 Z" fill="#a3a3a3"/></svg>
<svg style="position:absolute;z-index:6;left:1347px;top:758px" width="10" height="10" viewBox="0 0 10 10"><path d="M3 1.5 V8.5 L7.5 5 Z" fill="#a3a3a3"/></svg>
</body></html>
